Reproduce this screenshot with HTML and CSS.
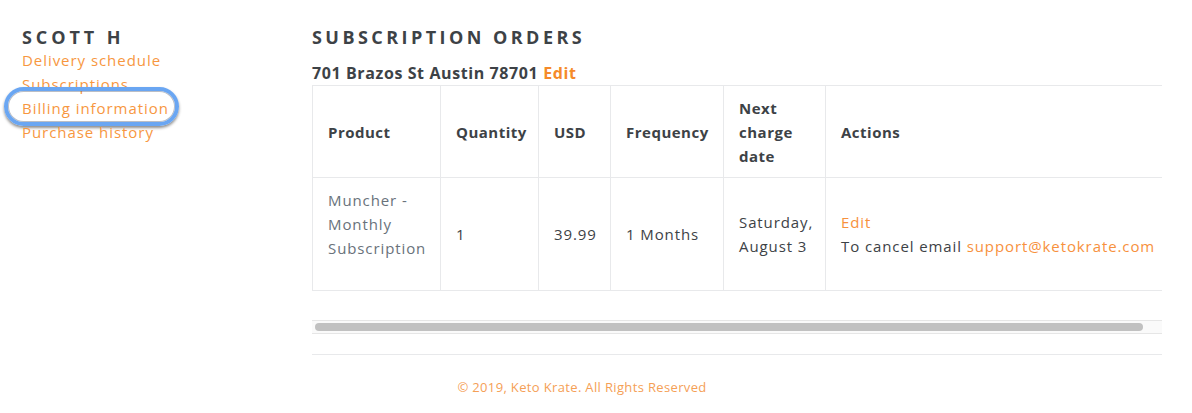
FILE: index.html
```html
<!DOCTYPE html>
<html>
<head>
<meta charset="utf-8">
<link rel="stylesheet" href="styles.css">
</head>
<body>
<div class="page">
  <aside class="side">
    <h2 class="name">SCOTT H</h2>
    <nav class="nav">
      <a href="#">Delivery schedule</a>
      <a href="#">Subscriptions</a>
      <a href="#" class="focused">Billing information</a>
      <a href="#">Purchase history</a>
    </nav>
  </aside>
  <main class="main">
    <h1 class="title">SUBSCRIPTION ORDERS</h1>
    <div class="addr">701 Brazos St Austin 78701 <a href="#">Edit</a></div>
    <div class="scroller">
      <table class="orders">
        <thead>
          <tr>
            <th class="c-prod">Product</th>
            <th class="c-qty">Quantity</th>
            <th class="c-usd">USD</th>
            <th class="c-freq">Frequency</th>
            <th class="c-date">Next charge date</th>
            <th class="c-act">Actions</th>
          </tr>
        </thead>
        <tbody>
          <tr>
            <td class="prod">Muncher - Monthly Subscription</td>
            <td>1</td>
            <td>39.99</td>
            <td>1 Months</td>
            <td>Saturday, August 3</td>
            <td><a href="#">Edit</a><br>To cancel email <a href="#">support@ketokrate.com</a></td>
          </tr>
        </tbody>
      </table>
    </div>
    <div class="track"><div class="thumb"></div></div>
    <div class="rule"></div>
    <footer class="foot">© 2019, Keto Krate. All Rights Reserved</footer>
  </main>
</div>
</body>
</html>
```

FILE: styles.css
```css
html, body {
  margin: 0;
  padding: 0;
  background: #fff;
}
body {
  font-family: "Open Sans", "Liberation Sans", sans-serif;
  color: #3d4246;
  font-size: 15px;
  line-height: 24px;
}
a {
  color: #f7913d;
  text-decoration: none;
}
.page {
  display: grid;
  grid-template-columns: 290px 850px;
  padding: 24px 0 0 22px;
}
.name {
  margin: 0;
  font-size: 18px;
  font-weight: 700;
  letter-spacing: 3.9px;
  line-height: 26px;
  color: #3d4246;
}
.nav {
  margin-top: -2px;
  display: flex;
  flex-direction: column;
  align-items: flex-start;
  font-size: 15px;
  line-height: 24px;
  letter-spacing: 0.95px;
}
.nav a {
  position: relative;
  color: #f7973f;
}
.focused::after {
  content: "";
  position: absolute;
  left: -18px;
  right: -10px;
  top: -9px;
  bottom: -6px;
  border: 4px solid #6aa6f2;
  border-radius: 20px;
  box-shadow: 0 2px 3px rgba(0, 0, 0, 0.45), inset 0 0 0 1px rgba(60, 70, 90, 0.35);
}
.title {
  margin: 0;
  font-size: 18px;
  font-weight: 700;
  letter-spacing: 3.45px;
  line-height: 26px;
  color: #3d4246;
}
.addr {
  margin-top: 12px;
  font-weight: 700;
  font-size: 16px;
  letter-spacing: 0.6px;
  line-height: 23px;
}
.addr a {
  color: #f58a2a;
}
.scroller {
  width: 850px;
  overflow: hidden;
}
.orders {
  border-collapse: collapse;
  table-layout: fixed;
  width: 872px;
}
.orders th, .orders td {
  box-sizing: border-box;
  border: 1px solid #e8e9eb;
  text-align: left;
  vertical-align: middle;
  padding: 10px 15px 9px;
  font-size: 15px;
  line-height: 24px;
}
.orders th {
  font-weight: 700;
  letter-spacing: 0.5px;
  color: #3d4246;
}
.orders td {
  padding: 20px 15px;
  letter-spacing: 0.9px;
  color: #3d4246;
}
.orders td.prod {
  color: #69727b;
  vertical-align: top;
  padding: 10px 15px 30px;
}
.c-prod { width: 128px; }
.c-qty { width: 98px; }
.c-usd { width: 72px; }
.c-freq { width: 113px; }
.c-date { width: 102px; }
.c-act { width: 359px; }
.track {
  margin-top: 29px;
  width: 850px;
  height: 12px;
  border-top: 1px solid #e6e6e6;
  border-bottom: 1px solid #e6e6e6;
  background: #fafafa;
  display: flex;
  align-items: center;
}
.thumb {
  margin-left: 3px;
  width: 828px;
  height: 8px;
  border-radius: 4px;
  background: #c1c1c1;
}
.rule {
  margin-top: 20px;
  width: 850px;
  border-top: 1px solid #e8e9eb;
}
.foot {
  width: 540px;
  text-align: center;
  margin-top: 23px;
  font-size: 13px;
  letter-spacing: 0.35px;
  line-height: 18px;
  color: #f5a056;
}
```
